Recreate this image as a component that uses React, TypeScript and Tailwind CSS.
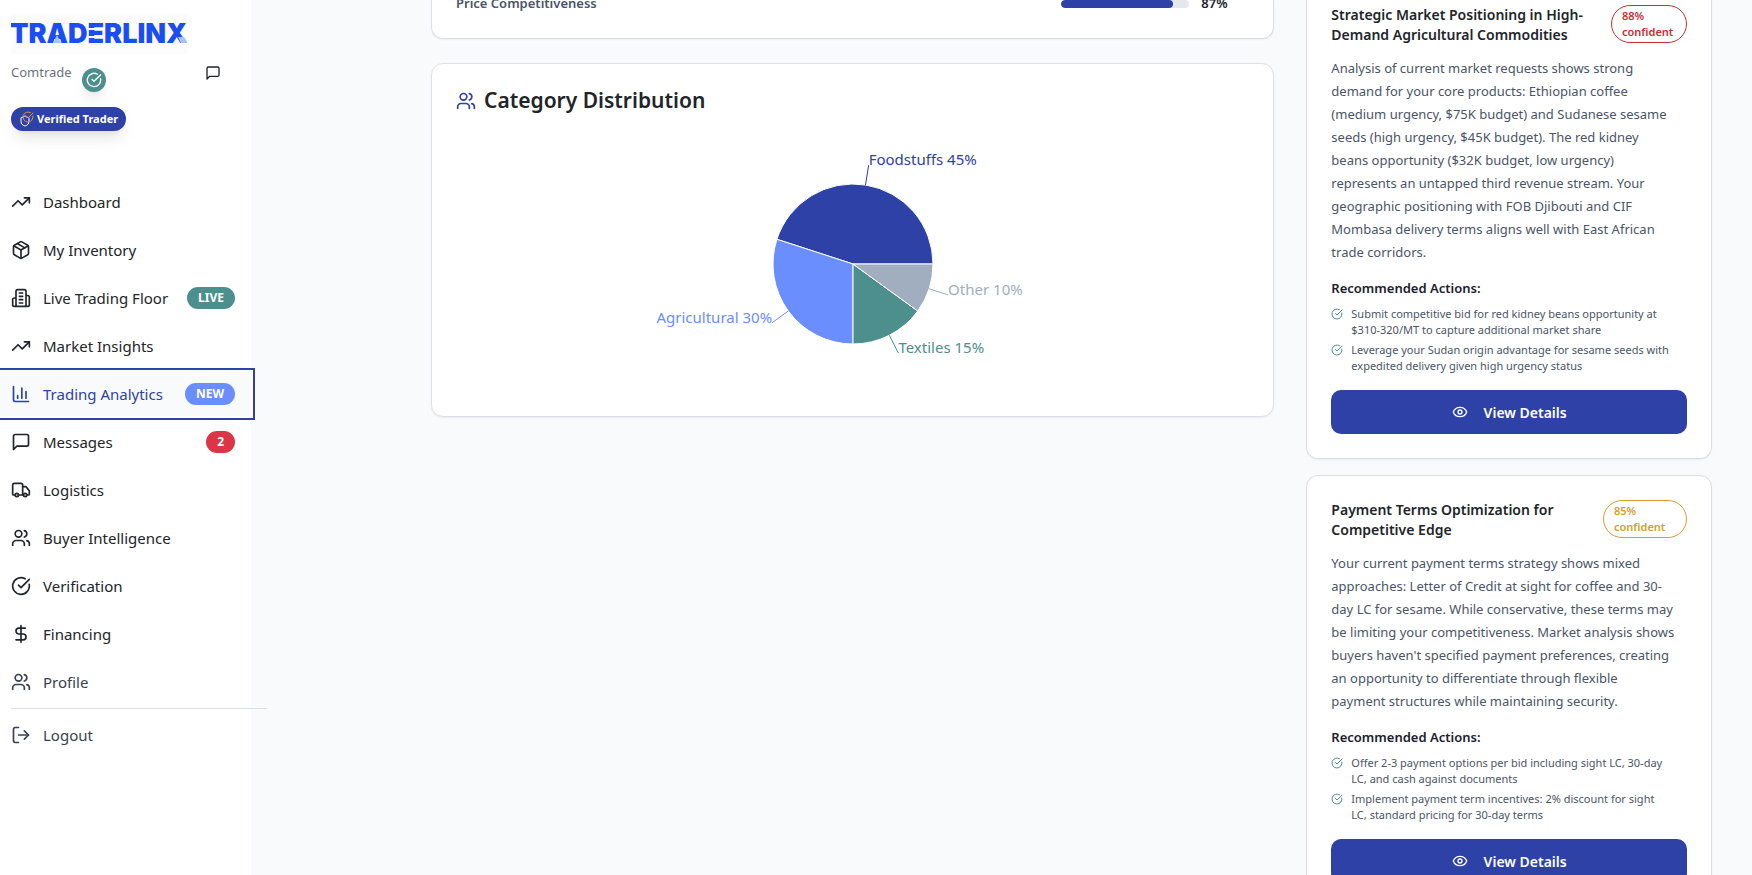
import React from "react";
import { CircleCheckBig, DollarSign, Eye, LogOut, Package, Shield, TrendingUp, Truck, Users } from "lucide-react";

type IconProps = { className?: string };
type IconType = React.ComponentType<IconProps>;

function StrokeIcon({ className, d }: IconProps & { d: string }) {
  return (
    <svg
      viewBox="0 0 24 24"
      fill="none"
      stroke="currentColor"
      strokeWidth="2"
      strokeLinecap="round"
      strokeLinejoin="round"
      aria-hidden="true"
      className={className}
    >
      <path d={d} />
    </svg>
  );
}

const MessageIcon: IconType = ({ className }) => (
  <StrokeIcon className={className} d="M21 15a2 2 0 0 1-2 2H7l-4 4V5a2 2 0 0 1 2-2h14a2 2 0 0 1 2 2z" />
);

const BuildingIcon: IconType = ({ className }) => (
  <StrokeIcon
    className={className}
    d="M6 22V4a2 2 0 0 1 2-2h8a2 2 0 0 1 2 2v18Z M6 12H4a2 2 0 0 0-2 2v6a2 2 0 0 0 2 2h2 M18 9h2a2 2 0 0 1 2 2v9a2 2 0 0 1-2 2h-2 M10 6h4 M10 10h4 M10 14h4 M10 18h4"
  />
);

const ChartIcon: IconType = ({ className }) => (
  <StrokeIcon className={className} d="M3 3v16a2 2 0 0 0 2 2h16 M18 17V9 M13 17V5 M8 17v-3" />
);

type NavItem = { label: string; icon: IconType; badge?: string; tone?: string; active?: boolean; muted?: boolean };

const navItems: NavItem[] = [
  { label: "Dashboard", icon: TrendingUp },
  { label: "My Inventory", icon: Package },
  { label: "Live Trading Floor", icon: BuildingIcon, badge: "LIVE", tone: "bg-[#4d8f8d]" },
  { label: "Market Insights", icon: TrendingUp },
  { label: "Trading Analytics", icon: ChartIcon, badge: "NEW", tone: "bg-[#6b8eff]", active: true },
  { label: "Messages", icon: MessageIcon, badge: "2", tone: "bg-[#dc3545]" },
  { label: "Logistics", icon: Truck },
  { label: "Buyer Intelligence", icon: Users },
  { label: "Verification", icon: CircleCheckBig },
  { label: "Financing", icon: DollarSign },
  { label: "Profile", icon: Users, muted: true },
];

function NavButton({ item }: { item: NavItem }) {
  const Icon = item.icon;
  const color = item.active
    ? "bg-[#f8fafc] text-[#2d41a7] outline-2 outline-offset-2 outline-[#2d41a7]"
    : item.muted
      ? "text-[#374151]"
      : "text-[#212529]";
  return (
    <button type="button" className={`flex h-11 w-full items-center gap-3 pr-4 pl-[11px] text-left ${color}`}>
      <Icon className="size-5 shrink-0" />
      <span className="flex-1 text-[15px] whitespace-nowrap">{item.label}</span>
      {item.badge && (
        <span
          className={`flex h-[22px] items-center rounded-full px-[11px] text-[12px] font-bold text-white ${item.tone}`}
        >
          {item.badge}
        </span>
      )}
    </button>
  );
}

function Logo() {
  return (
    <svg viewBox="0 0 176 40" role="img" aria-label="TRADERLINX" className="h-10 w-44 bg-[#fcfcfc]">
      <text x="-1" y="29" fill="#1b4df5" fontSize="27" fontWeight="900" fontFamily="Inter, sans-serif">
        TRADERLINX
      </text>
      <path d="M77 14h8v2h-8z M77 22h8v2h-8z" fill="#fcfcfc" />
      <path d="M46 21l4 8h-8z" fill="#a5c5fb" />
      <path d="M167 23h6l4 6h-7z" fill="#a5c5fb" />
    </svg>
  );
}

function Sidebar() {
  return (
    <aside className="w-[251px] shrink-0 bg-white">
      <div className="px-[11px] pt-3.5">
        <Logo />
        <div className="mt-2 flex items-start">
          <span className="text-[13px] leading-5 text-[#6b7280]">Comtrade</span>
          <span className="mt-1.5 ml-2.5 flex size-6 items-center justify-center rounded-full bg-[#4d8f8d] text-white shadow-lg">
            <CircleCheckBig className="size-4" />
          </span>
          <button type="button" aria-label="Messages" className="mt-[3px] mr-[19px] ml-auto text-[#212529]">
            <MessageIcon className="size-4" />
          </button>
        </div>
        <div className="mt-[15px] inline-flex h-6 items-center rounded-full bg-[#2d41a7] pr-2 pl-2 text-[11px] font-bold text-white shadow-lg">
          <span className="relative h-4 w-[18px]">
            <Shield className="absolute top-1 left-0 size-3" />
            <CircleCheckBig className="absolute top-0 left-[3px] size-3 text-[#d99a2b]" />
          </span>
          Verified Trader
        </div>
      </div>
      <nav className="mt-[47px]">
        <ul className="flex flex-col gap-1">
          {navItems.map((item) => (
            <li key={item.label}>
              <NavButton item={item} />
            </li>
          ))}
        </ul>
        <div className="mt-1 -mr-4 ml-[11px] border-t border-[#dcdfe6]" />
        <div className="mt-1">
          <NavButton item={{ label: "Logout", icon: LogOut, muted: true }} />
        </div>
      </nav>
    </aside>
  );
}

type Slice = { name: string; value: number; color: string };

const slices: Slice[] = [
  { name: "Foodstuffs", value: 45, color: "#2d41a7" },
  { name: "Agricultural", value: 30, color: "#6b8eff" },
  { name: "Textiles", value: 15, color: "#4d8f8d" },
  { name: "Other", value: 10, color: "#a0aec0" },
];

function PieChart() {
  const cx = 200;
  const cy = 125;
  const point = (r: number, percent: number) => {
    const angle = (percent / 100) * 2 * Math.PI;
    return { x: cx + r * Math.cos(angle), y: cy - r * Math.sin(angle) };
  };
  let start = 0;
  const parts = slices.map((slice) => {
    const from = point(80, start);
    const to = point(80, start + slice.value);
    const edge = point(80, start + slice.value / 2);
    const label = point(100, start + slice.value / 2);
    start += slice.value;
    return { slice, from, to, edge, label };
  });
  return (
    <svg
      viewBox="0 0 400 253"
      className="mx-auto h-[253px] w-[400px] overflow-visible"
      role="img"
      aria-label="Category distribution"
    >
      {parts.map(({ slice, from, to }) => (
        <path
          key={slice.name}
          d={`M${cx} ${cy}L${from.x} ${from.y}A80 80 0 0 0 ${to.x} ${to.y}Z`}
          fill={slice.color}
          stroke="#fff"
        />
      ))}
      {parts.map(({ slice, edge, label }) => (
        <g key={slice.name}>
          <path d={`M${edge.x} ${edge.y}L${label.x} ${label.y}`} stroke={slice.color} />
          <text x={label.x} y={label.y} fill={slice.color} fontSize="15" textAnchor={label.x < cx ? "end" : "start"}>
            {`${slice.name} ${slice.value}%`}
          </text>
        </g>
      ))}
    </svg>
  );
}

type Insight = {
  title: string;
  confidence: number;
  badge: string;
  card: string;
  body: string;
  actions: string[];
};

const insights: Insight[] = [
  {
    title: "Strategic Market Positioning in High-\nDemand Agricultural Commodities",
    confidence: 88,
    badge: "w-[76px] border-[#c53030] text-[#c53030]",
    card: "rounded-b-xl border-t-0 pt-[5px]",
    body: "Analysis of current market requests shows strong\ndemand for your core products: Ethiopian coffee\n(medium urgency, $75K budget) and Sudanese sesame\nseeds (high urgency, $45K budget). The red kidney\nbeans opportunity ($32K budget, low urgency)\nrepresents an untapped third revenue stream. Your\ngeographic positioning with FOB Djibouti and CIF\nMombasa delivery terms aligns well with East African\ntrade corridors.",
    actions: [
      "Submit competitive bid for red kidney beans opportunity at\n$310-320/MT to capture additional market share",
      "Leverage your Sudan origin advantage for sesame seeds with\nexpedited delivery given high urgency status",
    ],
  },
  {
    title: "Payment Terms Optimization for\nCompetitive Edge",
    confidence: 85,
    badge: "w-[84px] border-[#d69e2e] text-[#d69e2e]",
    card: "rounded-xl pt-6",
    body: "Your current payment terms strategy shows mixed\napproaches: Letter of Credit at sight for coffee and 30-\nday LC for sesame. While conservative, these terms may\nbe limiting your competitiveness. Market analysis shows\nbuyers haven't specified payment preferences, creating\nan opportunity to differentiate through flexible\npayment structures while maintaining security.",
    actions: [
      "Offer 2-3 payment options per bid including sight LC, 30-day\nLC, and cash against documents",
      "Implement payment term incentives: 2% discount for sight\nLC, standard pricing for 30-day terms",
    ],
  },
];

function InsightCard({ insight }: { insight: Insight }) {
  return (
    <article className={`border border-[#dcdfe6] bg-white px-6 pb-6 shadow-xs ${insight.card}`}>
      <div className="flex items-start justify-between gap-2">
        <h3 className="text-[14px] leading-5 font-semibold whitespace-pre-line text-[#212529]">{insight.title}</h3>
        <span
          className={`h-[38px] shrink-0 rounded-full border px-2.5 py-0.5 text-[11px] leading-4 font-semibold ${insight.badge}`}
        >
          {`${insight.confidence}% confident`}
        </span>
      </div>
      <p className="mt-3 text-[13px] leading-[23px] whitespace-pre-line text-[#4a5568]">{insight.body}</p>
      <h4 className="mt-3.5 text-[13px] leading-5 font-semibold text-[#1a202c]">Recommended Actions:</h4>
      <ul className="mt-2 flex flex-col gap-1">
        {insight.actions.map((action) => (
          <li key={action} className="flex items-start gap-2 text-[11px] leading-4 text-[#4a5568]">
            <CircleCheckBig className="mt-0.5 size-3 shrink-0 text-[#4d8f8d]" />
            <span className="whitespace-pre-line">{action}</span>
          </li>
        ))}
      </ul>
      <button
        type="button"
        className="mt-4 flex h-11 w-full items-center justify-center gap-4 rounded-[10px] bg-[#2d41a7] text-[14px] font-semibold text-white"
      >
        <Eye className="size-4" />
        View Details
      </button>
    </article>
  );
}

export default function App() {
  return (
    <div className="flex h-screen overflow-hidden bg-[#f8fafc] font-['Noto_Sans','Open_Sans',sans-serif]">
      <Sidebar />
      <main className="grid flex-1 grid-cols-3 items-start gap-8 pr-10 pl-[180px]">
        <div className="col-span-2 flex flex-col gap-6">
          <section className="rounded-b-xl border border-t-0 border-[#dcdfe6] bg-white px-6 pb-6 shadow-xs">
            <div className="-mt-1.5 flex h-5 items-center gap-3 text-[13px] font-semibold">
              <span className="flex-1 text-[#4a5568]">Price Competitiveness</span>
              <div className="h-2 w-32 overflow-hidden rounded-full bg-[#e5e7eb]">
                <div className="h-full w-7/8 rounded-full bg-[#2d41a7]" />
              </div>
              <span className="w-12 text-[#1a202c]">87%</span>
            </div>
          </section>
          <section className="rounded-xl border border-[#dcdfe6] bg-white p-6 shadow-xs">
            <h2 className="flex h-[26px] items-center gap-2 text-[21px] font-semibold text-[#212529]">
              <Users className="size-5 text-[#2d41a7]" />
              Category Distribution
            </h2>
            <div className="mt-[25px]">
              <PieChart />
            </div>
          </section>
        </div>
        <div className="flex flex-col gap-4">
          {insights.map((insight) => (
            <InsightCard key={insight.title} insight={insight} />
          ))}
        </div>
      </main>
    </div>
  );
}
